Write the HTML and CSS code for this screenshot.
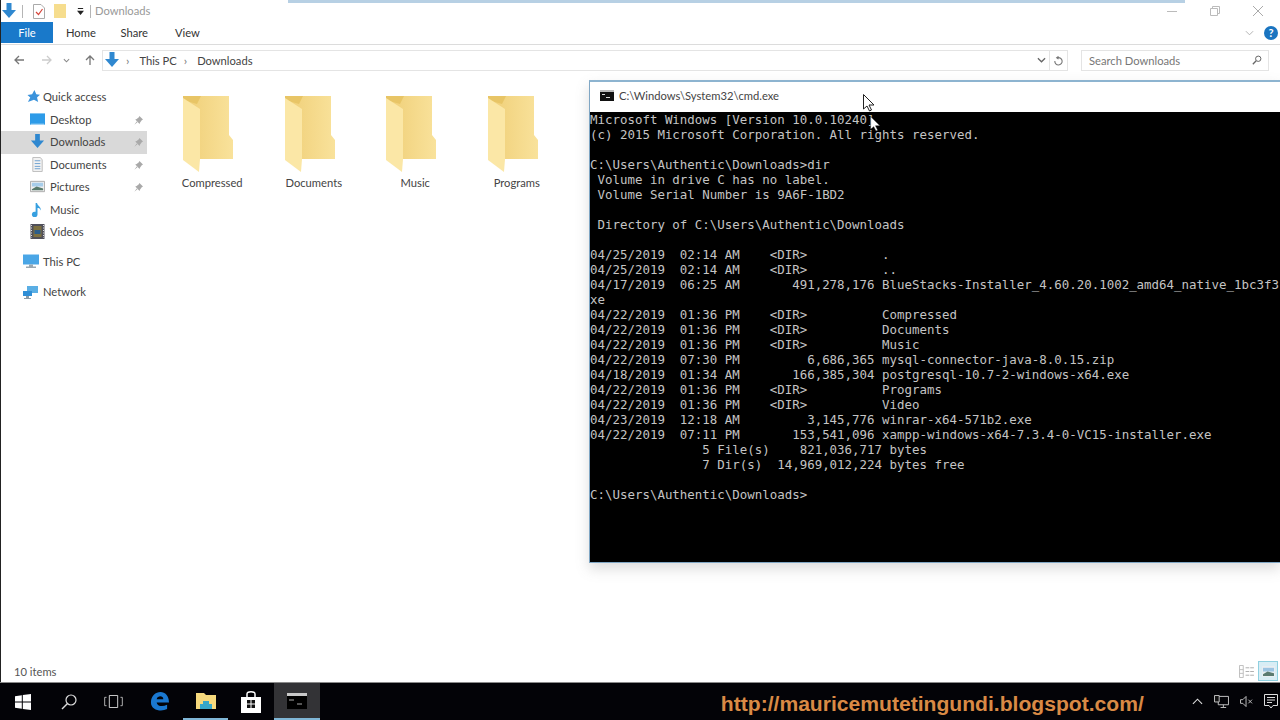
FILE: index.html
```html
<!DOCTYPE html>
<html lang="en">
<head>
<meta charset="UTF-8">
<title>Downloads</title>
<link rel="stylesheet" href="styles.css">
</head>
<body>

<svg class="defs" width="0" height="0">
  <defs>
    <linearGradient id="backFill" x1="0" y1="0" x2="1" y2="0">
      <stop offset="0" stop-color="#efce76"/>
      <stop offset="1" stop-color="#f9e29b"/>
    </linearGradient>
    <symbol id="folder" viewBox="0 0 52 76">
      <path d="M0 0H46V39L50 44V63H17L0 3Z" fill="url(#backFill)"/>
      <path d="M0 0H18L14 8 0 4Z" fill="#e8c566"/>
      <path d="M0 2L17 13V63L16 76 0 64Z" fill="#fbe7a6"/>
    </symbol>
    <symbol id="downArrow" viewBox="0 0 14 16">
      <path d="M4.500 0H9.500V7H14L7 15 0 7H4.500Z" fill="#2f88d0"/>
    </symbol>
    <symbol id="pin" viewBox="0 0 10 10">
      <path d="M6 0L10 4 8.600 4.600 6.600 7.400 6.200 8.800 1.400 4 3 3.400 5.400 1.400ZM3 6.200L.4 9.600 3.800 7Z" fill="#a9a9a9"/>
    </symbol>
  </defs>
</svg>

<div class="explorer">
  <div class="titlebar">
    <svg class="qa-arrow"><use href="#downArrow"/></svg>
    <span class="qa-sep"></span>
    <svg class="qa-props" viewBox="0 0 12 15">
      <path d="M.5.5H8L11.500 4V14.500H.5Z" fill="#fff" stroke="#aaa"/>
      <path d="M3 8L5.500 10.500 9.500 5" fill="none" stroke="#d6453a" stroke-width="1.200"/>
    </svg>
    <svg class="qa-folder" viewBox="0 0 12 14"><path d="M0 0H12V14H0Z" fill="#f6dd8e"/></svg>
    <svg class="qa-drop" viewBox="0 0 8 8"><path d="M1 0H7V1H1ZM0 3H8L4 8Z" fill="#222"/></svg>
    <span class="qa-sep"></span>
    <span class="title-text">Downloads</span>
    <div class="win-buttons">
      <svg viewBox="0 0 10 10"><path d="M0 5.500H10" stroke="#bbb"/></svg>
      <svg viewBox="0 0 10 10"><path d="M.5 2.500H7.500V9.500H.5ZM2.500 2.500V.5H9.500V7.500H7.500" fill="none" stroke="#bbb"/></svg>
      <svg viewBox="0 0 10 10"><path d="M0 0L10 10M10 0L0 10" stroke="#aaa"/></svg>
    </div>
  </div>

  <div class="ribbon">
    <div class="tab-file">File</div>
    <div class="tab">Home</div>
    <div class="tab">Share</div>
    <div class="tab">View</div>
    <svg class="ribbon-chevron" viewBox="0 0 10 6"><path d="M1 1L5 5 9 1" fill="none" stroke="#aaa"/></svg>
    <div class="help">?</div>
  </div>

  <div class="addressrow">
    <svg class="nav-btn" viewBox="0 0 12 12"><path d="M11 6H2M6 2L2 6 6 10" fill="none" stroke="#777" stroke-width="1.300"/></svg>
    <svg class="nav-btn" viewBox="0 0 12 12"><path d="M1 6H10M6 2L10 6 6 10" fill="none" stroke="#ccc" stroke-width="1.300"/></svg>
    <svg class="nav-drop" viewBox="0 0 8 5"><path d="M1 1L4 4 7 1" fill="none" stroke="#888" stroke-width="1.200"/></svg>
    <svg class="nav-btn" viewBox="0 0 12 12"><path d="M6 11V2M2 6L6 2 10 6" fill="none" stroke="#777" stroke-width="1.300"/></svg>
    <div class="addressbox">
      <svg class="addr-arrow"><use href="#downArrow"/></svg>
      <span class="crumb-sep">›</span>
      <span class="crumb">This PC</span>
      <span class="crumb-sep">›</span>
      <span class="crumb">Downloads</span>
      <svg class="addr-drop" viewBox="0 0 10 6"><path d="M1 1L5 5 9 1" fill="none" stroke="#666" stroke-width="1.400"/></svg>
      <div class="addr-refresh">
        <svg viewBox="0 0 12 12"><path d="M6 1.500L4 3 6 4.500M5 3A4 4 0 1 1 2 6.500" fill="none" stroke="#777" stroke-width="1.200"/></svg>
      </div>
    </div>
    <div class="searchbox">
      <span>Search Downloads</span>
      <svg viewBox="0 0 12 12"><circle cx="7.500" cy="4.500" r="3.200" fill="none" stroke="#666" stroke-width="1.200"/><path d="M5 7L1 11" stroke="#666" stroke-width="1.600"/></svg>
    </div>
  </div>

  <div class="main">
    <nav class="navpane">
      <div class="nav-row top">
        <svg class="nav-icon" viewBox="0 0 14 14"><path d="M8 0L10 4.500 14 5 10.800 8 12 13 7.500 10.500 1 13 3.500 8 .5 5.500 5.500 4.500Z" fill="#3a93dc"/></svg>
        Quick access
      </div>
      <div class="nav-row sub">
        <svg class="nav-icon" viewBox="0 0 16 13"><path d="M0 0H16V12H0Z" fill="#2d9be8"/><path d="M1 11H15V12H1Z" fill="#bfe0f7"/></svg>
        Desktop
        <svg class="pin"><use href="#pin"/></svg>
      </div>
      <div class="nav-row sub selected">
        <svg class="nav-icon"><use href="#downArrow"/></svg>
        Downloads
        <svg class="pin"><use href="#pin"/></svg>
      </div>
      <div class="nav-row sub">
        <svg class="nav-icon" viewBox="0 0 16 16"><path d="M3 .5H11L13 3V15.500H3Z" fill="#f2f2f2" stroke="#bbb"/><path d="M5 4H11M5 7H11M5 10H11M5 12.500H11" stroke="#6a9fcf"/></svg>
        Documents
        <svg class="pin"><use href="#pin"/></svg>
      </div>
      <div class="nav-row sub">
        <svg class="nav-icon" viewBox="0 0 16 12"><path d="M.5.5H15.500V11.500H.5Z" fill="#eee" stroke="#aaa"/><path d="M2 2H14V6H2Z" fill="#a7cdea"/><path d="M2 9L7 6 14 8V10H2Z" fill="#587a6b"/></svg>
        Pictures
        <svg class="pin"><use href="#pin"/></svg>
      </div>
      <div class="nav-row sub">
        <svg class="nav-icon" viewBox="0 0 16 16"><path d="M6 1H7.500C8 4 12 5 11.500 9 10.500 6.500 9 6.500 8 6.500V13A3 3 0 1 1 6 10.500Z" fill="#38a0e0"/></svg>
        Music
      </div>
      <div class="nav-row sub">
        <svg class="nav-icon" viewBox="0 0 14 15"><path d="M0 0H14V15H0Z" fill="#50505a"/><path d="M3 2H11V13H3Z" fill="#7d7040"/><path d="M4 6H10V10H4Z" fill="#2c5d8a"/><path d="M1 1V14M13 1V14" stroke="#ddd" stroke-dasharray="1 1.500"/></svg>
        Videos
      </div>
      <div class="nav-row root">
        <svg class="nav-icon" viewBox="0 0 16 14"><path d="M0 0H16V10H0Z" fill="#4aa6e6"/><path d="M6 10H10V12H13V13.500H3V12H6Z" fill="#9aa7b0"/></svg>
        This PC
      </div>
      <div class="nav-row root">
        <svg class="nav-icon" viewBox="0 0 16 15"><path d="M4 2H15V9H4Z" fill="#5aaee4"/><path d="M0 7H9V12H0Z" fill="#2f8ed6"/><path d="M3 12H6V14H8V15H1V14H3Z" fill="#8a9aa6"/></svg>
        Network
      </div>
    </nav>

    <div class="folders">
      <div class="folder"><svg><use href="#folder"/></svg><span>Compressed</span></div>
      <div class="folder"><svg><use href="#folder"/></svg><span>Documents</span></div>
      <div class="folder"><svg><use href="#folder"/></svg><span>Music</span></div>
      <div class="folder"><svg><use href="#folder"/></svg><span>Programs</span></div>
    </div>
  </div>

  <div class="statusbar">
    <span>10 items</span>
    <svg class="view-details" viewBox="0 0 16 14"><path d="M.5.5H4.500V13.500H.5ZM.5 5H4.500M.5 9H4.500" fill="#fff" stroke="#bbb"/><path d="M7 3H11M12 3H16M7 7H11M12 7H16M7 11H11M12 11H16" stroke="#aaa"/></svg>
    <div class="view-large">
      <svg viewBox="0 0 14 12"><path d="M0 0H14V12H0Z" fill="#e8eef2"/><path d="M1 2H13V6H1Z" fill="#9cc4e2"/><path d="M1 9L6 6 13 8V11H1Z" fill="#5a7a70"/></svg>
    </div>
  </div>
</div>

<div class="taskbar">
  <div class="task-btn">
    <svg class="tb-win" viewBox="0 0 16 16"><path d="M0 2.300L6.800 1.300V7.500H0ZM7.800 1.100L16 0V7.500H7.800ZM0 8.500H6.800V14.700L0 13.700ZM7.800 8.500H16V16L7.800 14.900Z" fill="#fff"/></svg>
  </div>
  <div class="task-btn">
    <svg class="tb-search" viewBox="0 0 16 16"><circle cx="10" cy="6" r="5" fill="none" stroke="#ddd" stroke-width="1.200"/><path d="M6.500 9.500L1 15" stroke="#ddd" stroke-width="1.400"/></svg>
  </div>
  <div class="task-btn">
    <svg class="tb-view" viewBox="0 0 20 14"><path d="M5.500.5H14.500V13.500H5.500Z" fill="none" stroke="#ddd"/><path d="M2.500 2.500H.5V11.500H2.500M17.500 2.500H19.500V11.500H17.500" fill="none" stroke="#bbb"/></svg>
  </div>
  <div class="task-btn">
    <svg class="tb-edge" viewBox="0 0 20 20"><path d="M1 11C1 4 6 0 11 0 16 0 20 4 20 11H7C7.500 15 13 16 18 13.500V18C12 21 1 19.500 1 11ZM7 7.500H14C14 3.500 8 3.500 7 7.500Z" fill="#1a78d0"/></svg>
  </div>
  <div class="task-btn running">
    <svg class="tb-folder" viewBox="0 0 20 16"><path d="M0 0H8L10 2H20V16H0Z" fill="#f6d97c"/><path d="M4 11H16V16H4Z" fill="#36a7c9"/><path d="M7 8H13V11H7Z" fill="#36a7c9"/></svg>
  </div>
  <div class="task-btn">
    <svg class="tb-store" viewBox="0 0 20 22"><path d="M0 6H20V22H0Z" fill="#fff"/><path d="M6 6V3C6 0 14 0 14 3V6" fill="none" stroke="#fff" stroke-width="1.500"/><path d="M6 9H9.500V12.500H6ZM10.500 9H14V12.500H10.500ZM6 13.500H9.500V17H6ZM10.500 13.500H14V17H10.500Z" fill="#111"/></svg>
  </div>
  <div class="task-btn running active">
    <svg class="tb-cmd" viewBox="0 0 20 16"><path d="M0 0H20V16H0Z" fill="#000"/><path d="M0 0H20V3H0Z" fill="#c8c8c8"/><path d="M2 7H7M10 11H15" stroke="#aaa"/></svg>
  </div>
  <div class="watermark">http://mauricemutetingundi.blogspot.com/</div>
  <div class="tray">
    <svg class="tr-up" viewBox="0 0 12 7"><path d="M1 6L6 1 11 6" fill="none" stroke="#ddd" stroke-width="1.200"/></svg>
    <svg class="tr-net" viewBox="0 0 16 14"><path d="M4.500 1.500H15.500V10.500H4.500ZM10 10.500V13M7 13.500H13" fill="none" stroke="#ccc"/><path d="M.5.5H5.500V7.500H.5Z" fill="#111" stroke="#ccc"/></svg>
    <svg class="tr-vol" viewBox="0 0 14 12"><path d="M.5 4H3L6.500 .5V11.500L3 8H.5Z" fill="none" stroke="#ccc"/><path d="M9 4L13 8M13 4L9 8" stroke="#ccc"/></svg>
    <svg class="tr-action" viewBox="0 0 14 15"><path d="M.5.5H13.500V11.500H9L7 14 5 11.500H.5Z" fill="none" stroke="#ddd"/><path d="M3 3.500H11M3 6H11M3 8.500H8" stroke="#ddd"/></svg>
  </div>
</div>

<div class="top-strip"></div>

<!-- cmd window hangs off the right edge of the screen -->
<div class="cmd">
  <div class="cmd-title">
    <svg viewBox="0 0 14 11"><path d="M0 0H14V11H0Z" fill="#111"/><path d="M0 0H14V2H0Z" fill="#bbb"/><path d="M2 4.500H5M6 7.500H10" stroke="#ddd"/></svg>
    <span>C:\Windows\System32\cmd.exe</span>
  </div>
  <pre class="console">Microsoft Windows [Version 10.0.10240]
(c) 2015 Microsoft Corporation. All rights reserved.

C:\Users\Authentic\Downloads&gt;dir
 Volume in drive C has no label.
 Volume Serial Number is 9A6F-1BD2

 Directory of C:\Users\Authentic\Downloads

04/25/2019  02:14 AM    &lt;DIR&gt;          .
04/25/2019  02:14 AM    &lt;DIR&gt;          ..
04/17/2019  06:25 AM       491,278,176 BlueStacks-Installer_4.60.20.1002_amd64_native_1bc3f3
xe
04/22/2019  01:36 PM    &lt;DIR&gt;          Compressed
04/22/2019  01:36 PM    &lt;DIR&gt;          Documents
04/22/2019  01:36 PM    &lt;DIR&gt;          Music
04/22/2019  07:30 PM         6,686,365 mysql-connector-java-8.0.15.zip
04/18/2019  01:34 AM       166,385,304 postgresql-10.7-2-windows-x64.exe
04/22/2019  01:36 PM    &lt;DIR&gt;          Programs
04/22/2019  01:36 PM    &lt;DIR&gt;          Video
04/23/2019  12:18 AM         3,145,776 winrar-x64-571b2.exe
04/22/2019  07:11 PM       153,541,096 xampp-windows-x64-7.3.4-0-VC15-installer.exe
               5 File(s)    821,036,717 bytes
               7 Dir(s)  14,969,012,224 bytes free

C:\Users\Authentic\Downloads&gt;</pre>
</div>

<svg class="cursor cursor-ghost" viewBox="0 0 12 18"><path d="M.5.5V15L4 12 6.500 17 8.500 16 6 11H11Z" fill="#fff" stroke="#222"/></svg>
<svg class="cursor cursor-main" viewBox="0 0 12 18"><path d="M.5.5V15L4 12 6.500 17 8.500 16 6 11H11Z" fill="#fff" stroke="#111" stroke-width=".5"/></svg>

</body>
</html>
```

FILE: styles.css
```css
* {
  box-sizing: border-box;
}

body {
  margin: 0;
  width: 1280px;
  height: 720px;
  overflow: hidden;
  position: relative;
  background: #fff;
  font-family: Lato, "Open Sans", sans-serif;
  font-size: 11.2px;
  color: #333;
}

svg {
  display: block;
  flex: none;
}

.defs {
  position: absolute;
}

.explorer {
  height: 682px;
  display: flex;
  flex-direction: column;
  border-left: 1px solid #222;
  background: #fff;
}

/* title bar */
.titlebar {
  height: 22px;
  display: flex;
  align-items: center;
  padding-left: 1px;
}

.qa-arrow {
  width: 14px;
  height: 16px;
}

.qa-sep {
  width: 1px;
  height: 13px;
  background: #b5b5b5;
  margin: 0 6px;
}

.qa-props {
  width: 12px;
  height: 15px;
  margin-left: 4px;
}

.qa-folder {
  width: 12px;
  height: 14px;
  margin-left: 9px;
}

.qa-drop {
  width: 7px;
  height: 7px;
  margin-left: 11px;
}

.title-text {
  color: #999;
  margin: 0 0 2px -2px;
}

.win-buttons {
  margin-left: auto;
  display: flex;
  gap: 33px;
  padding-right: 17px;
}

.win-buttons svg {
  width: 10px;
  height: 10px;
}

/* ribbon */
.ribbon {
  height: 23px;
  display: flex;
  align-items: center;
  border-bottom: 1px solid #dcdcdc;
  padding-bottom: 1px;
}

.tab-file {
  width: 52px;
  height: 21px;
  background: #1979ca;
  color: #fff;
  text-align: center;
  line-height: 21px;
  margin-right: 13px;
}

.tab {
  width: 54.5px;
}

.ribbon-chevron {
  width: 9px;
  height: 6px;
  margin-left: auto;
  margin-right: 10px;
}

.help {
  width: 14px;
  height: 14px;
  border-radius: 50%;
  background: #1a74c0;
  color: #fff;
  font-size: 11px;
  font-weight: 700;
  line-height: 14px;
  text-align: center;
  margin-right: 2px;
}

/* address row */
.addressrow {
  height: 35px;
  display: flex;
  align-items: center;
  padding: 0 11px 5px 12px;
}

.nav-btn {
  width: 12px;
  height: 12px;
  margin-right: 16px;
}

.nav-drop {
  width: 7px;
  height: 5px;
  margin: 0 14px 0 -6px;
}

.addressbox {
  width: 966px;
  height: 21px;
  margin-left: -10px;
  display: flex;
  align-items: center;
  border: 1px solid #e4e4e4;
  padding-left: 2px;
}

.addr-arrow {
  width: 14px;
  height: 16px;
}

.crumb-sep {
  color: #777;
  margin: 0 10px 0 7px;
  font-size: 12px;
}

.crumb {
  color: #444;
}

.addr-drop {
  width: 9px;
  height: 6px;
  margin-left: auto;
  margin-right: 3px;
}

.addr-refresh {
  width: 18px;
  height: 100%;
  border-left: 1px solid #e4e4e4;
  display: flex;
  align-items: center;
  justify-content: center;
}

.addr-refresh svg {
  width: 11px;
  height: 11px;
}

.searchbox {
  width: 188px;
  height: 21px;
  margin-left: auto;
  border: 1px solid #e4e4e4;
  display: flex;
  align-items: center;
  justify-content: space-between;
  padding: 0 6px 0 7px;
  color: #777;
}

.searchbox svg {
  width: 10px;
  height: 10px;
}

/* main area */
.main {
  flex: 1;
  display: flex;
}

.navpane {
  width: 146px;
  padding-top: 6px;
  color: #444;
}

.nav-row {
  height: 22.5px;
  display: flex;
  align-items: center;
  position: relative;
  padding-bottom: 1px;
}

.nav-row.top {
  padding-left: 26px;
}

.nav-row.top .nav-icon {
  width: 13px;
  height: 13px;
  margin-right: 3px;
}

.nav-row.sub {
  padding-left: 29px;
}

.nav-row.sub .nav-icon {
  width: 15px;
  height: 15px;
  margin-right: 5px;
}

.nav-row.root {
  padding-left: 22px;
  margin-top: 7.5px;
}

.nav-row.root .nav-icon {
  width: 16px;
  height: 15px;
  margin-right: 4px;
}

.nav-row.selected {
  background: #d9d9d9;
}

.pin {
  position: absolute;
  right: 4px;
  top: 7px;
  width: 9px;
  height: 9px;
}

.folders {
  padding: 16px 0 0 14.5px;
  display: flex;
  align-items: flex-start;
}

.folder {
  width: 101.5px;
  display: flex;
  flex-direction: column;
  align-items: center;
  color: #444;
}

.folder svg {
  width: 52px;
  height: 76px;
  margin-left: -6px;
}

.folder span {
  margin-top: 3px;
  line-height: 16px;
}

/* status bar */
.statusbar {
  height: 22px;
  display: flex;
  align-items: center;
  padding: 0 2px 0 13px;
  color: #555;
}

.view-details {
  width: 15px;
  height: 13px;
  margin-left: auto;
  margin-right: 4px;
}

.view-large {
  width: 20px;
  height: 20px;
  border: 1px solid #8fd0e0;
  background: #d8edf5;
  display: flex;
  align-items: center;
  justify-content: center;
}

.view-large svg {
  width: 13px;
  height: 11px;
}

/* taskbar */
.taskbar {
  height: 38px;
  display: flex;
  align-items: center;
  background: #030307;
  border-top: 1px solid #8a8a8a;
}

.task-btn {
  width: 45.7px;
  height: 100%;
  display: flex;
  align-items: center;
  justify-content: center;
  flex: none;
}

.task-btn.running {
  border-bottom: 2px solid #7fb6d6;
}

.task-btn.active {
  background: #333336;
}

.tb-win {
  width: 16px;
  height: 16px;
}

.tb-search {
  width: 16px;
  height: 16px;
}

.tb-view {
  width: 19px;
  height: 13px;
  margin-left: -2px;
}

.tb-edge {
  width: 19px;
  height: 19px;
}

.tb-folder {
  width: 20px;
  height: 16px;
}

.tb-store {
  width: 20px;
  height: 22px;
}

.tb-cmd {
  width: 20px;
  height: 16px;
}

.watermark {
  margin-left: 401px;
  padding-top: 5px;
  font-family: "Liberation Sans", Arial, sans-serif;
  font-weight: 700;
  font-size: 21.1px;
  color: #d98a45;
  white-space: nowrap;
}

.tray {
  margin-left: auto;
  display: flex;
  align-items: center;
  gap: 11px;
  padding-right: 2px;
}

.tr-up {
  width: 11px;
  height: 7px;
}

.tr-net {
  width: 15px;
  height: 13px;
}

.tr-vol {
  width: 13px;
  height: 11px;
}

.tr-action {
  width: 14px;
  height: 15px;
}

.top-strip {
  position: absolute;
  left: 288px;
  top: 0;
  width: 897px;
  height: 3px;
  background: #b7d0e4;
}

/* cmd window */
.cmd {
  position: absolute;
  left: 589px;
  top: 80px;
  width: 691px;
  height: 483px;
  background: #fff;
  border-top: 2px solid #8db4d0;
  border-left: 1px solid #7fa6c4;
  border-bottom: 1px solid #7fa6c4;
  box-shadow: 0 6px 12px rgba(120, 120, 120, .25);
  display: flex;
  flex-direction: column;
}

.cmd-title {
  height: 30px;
  flex: none;
  display: flex;
  align-items: center;
  padding: 0 0 3px 10px;
  gap: 5px;
  color: #444;
}

.cmd-title svg {
  width: 14px;
  height: 11px;
}

.console {
  flex: 1;
  margin: 0;
  background: #000;
  color: #c4c4c4;
  font-family: "DejaVu Sans Mono", "Liberation Mono", monospace;
  font-size: 12.45px;
  line-height: 15px;
  overflow: hidden;
}

.cursor {
  position: absolute;
}

.cursor-ghost {
  left: 863px;
  top: 94px;
  width: 12px;
  height: 18px;
}

.cursor-main {
  left: 870px;
  top: 116px;
  width: 11px;
  height: 16px;
}
```
